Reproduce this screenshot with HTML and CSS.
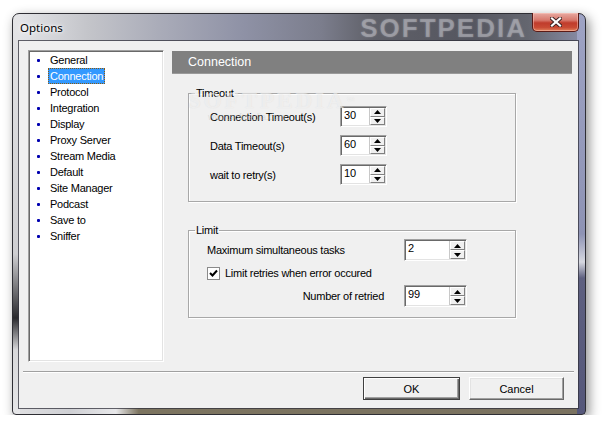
FILE: index.html
```html
<!DOCTYPE html>
<html lang="en">
<head>
  <meta charset="UTF-8">
  <meta name="viewport" content="width=device-width, initial-scale=1.0">
  <title>Options</title>
  <link rel="stylesheet" href="styles.css">
</head>
<body>
  <div class="window">
    <div class="titlebar">
      <span class="title">Options</span>
      <span class="watermark">SOFTPEDIA</span>
      <button class="close-btn">
        <svg width="12" height="10" viewBox="0 0 12 10">
          <path d="M2 1.5 L10 8.5 M10 1.5 L2 8.5" stroke="#3a2020" stroke-width="4" stroke-linecap="square"/>
          <path d="M2 1.5 L10 8.5 M10 1.5 L2 8.5" stroke="#fff" stroke-width="2.2" stroke-linecap="square"/>
        </svg>
      </button>
    </div>

    <div class="client">
      <div class="main">
        <ul class="nav-list">
          <li><span>General</span></li>
          <li class="selected"><span>Connection</span></li>
          <li><span>Protocol</span></li>
          <li><span>Integration</span></li>
          <li><span>Display</span></li>
          <li><span>Proxy Server</span></li>
          <li><span>Stream Media</span></li>
          <li><span>Default</span></li>
          <li><span>Site Manager</span></li>
          <li><span>Podcast</span></li>
          <li><span>Save to</span></li>
          <li><span>Sniffer</span></li>
        </ul>

        <div class="panel">
          <div class="panel-header">Connection</div>

          <fieldset class="group group-timeout">
            <legend>Timeout</legend>
            <div class="row">
              <label>Connection Timeout(s)</label>
              <div class="spin">
                <input type="text" value="30">
                <span class="spin-btns">
                  <span class="spin-up"><svg width="7" height="4"><polygon points="0,4 3.5,0 7,4"/></svg></span>
                  <span class="spin-down"><svg width="7" height="4"><polygon points="0,0 3.5,4 7,0"/></svg></span>
                </span>
              </div>
            </div>
            <div class="row">
              <label>Data Timeout(s)</label>
              <div class="spin">
                <input type="text" value="60">
                <span class="spin-btns">
                  <span class="spin-up"><svg width="7" height="4"><polygon points="0,4 3.5,0 7,4"/></svg></span>
                  <span class="spin-down"><svg width="7" height="4"><polygon points="0,0 3.5,4 7,0"/></svg></span>
                </span>
              </div>
            </div>
            <div class="row">
              <label>wait to retry(s)</label>
              <div class="spin">
                <input type="text" value="10">
                <span class="spin-btns">
                  <span class="spin-up"><svg width="7" height="4"><polygon points="0,4 3.5,0 7,4"/></svg></span>
                  <span class="spin-down"><svg width="7" height="4"><polygon points="0,0 3.5,4 7,0"/></svg></span>
                </span>
              </div>
            </div>
          </fieldset>

          <fieldset class="group group-limit">
            <legend>Limit</legend>
            <div class="row">
              <label>Maximum simultaneous tasks</label>
              <div class="spin spin-wide">
                <input type="text" value="2">
                <span class="spin-btns">
                  <span class="spin-up"><svg width="7" height="4"><polygon points="0,4 3.5,0 7,4"/></svg></span>
                  <span class="spin-down"><svg width="7" height="4"><polygon points="0,0 3.5,4 7,0"/></svg></span>
                </span>
              </div>
            </div>
            <div class="row row-check">
              <span class="checkbox">
                <svg width="11" height="11" viewBox="0 0 11 11"><path d="M2 5 L4.5 7.5 L9 2.5" fill="none" stroke="#000" stroke-width="2"/></svg>
              </span>
              <span>Limit retries when error occured</span>
            </div>
            <div class="row">
              <label class="label-right">Number of retried</label>
              <div class="spin spin-wide">
                <input type="text" value="99">
                <span class="spin-btns">
                  <span class="spin-up"><svg width="7" height="4"><polygon points="0,4 3.5,0 7,4"/></svg></span>
                  <span class="spin-down"><svg width="7" height="4"><polygon points="0,0 3.5,4 7,0"/></svg></span>
                </span>
              </div>
            </div>
          </fieldset>

          <div class="stamp">SOFTPEDIA<sup>™</sup><small>www.softpedia.com</small></div>
        </div>
      </div>

      <div class="separator"></div>

      <div class="buttons">
        <button class="btn btn-default">OK</button>
        <button class="btn">Cancel</button>
      </div>
    </div>
  </div>
</body>
</html>
```

FILE: styles.css
```css
body {
  margin: 0;
  background-color: #fff;
  font-family: "Liberation Sans", Arial, sans-serif;
  font-size: 11px;
  color: #000;
}

.window {
  margin: 13px 0 0 12px;
  width: 574px;
  height: 402px;
  box-sizing: border-box;
  display: flex;
  flex-direction: column;
  padding: 0 7px 6px 6px;
  border: 1px solid #2e2e34;
  border-radius: 7px 7px 4px 4px;
  box-shadow: 3px 4px 12px rgba(0, 0, 0, 0.45);
  background:
    linear-gradient(#e4e4e6, #cfcfd2 60%, #2a2a2e 76%, #d8d8da 84%, #e6e6e8) left top / 7px 100% no-repeat,
    linear-gradient(#9ea3c4, #8e93b4 55%, #d6d8e0 62%, #5e6080 66%, #55577a) right top / 8px 100% no-repeat,
    linear-gradient(to right, #e0e0e2, #cfd0d4 10%, #e8e8ea 18%, #7c7460 22%, #7a7260 100%) left bottom / 100% 7px no-repeat,
    linear-gradient(to right, #e6e7ea 0%, #c4c5ca 13%, #a9abb8 26%, #8f92a6 40%, #7b7d8c 54%, #5f6068 63%, #555660 80%, #64666f 90%, #8a8ea8 100%);
}

.titlebar {
  height: 27px;
  display: flex;
  align-items: flex-start;
}

.title {
  margin: 6px 0 0 1px;
  font-family: "Noto Sans", "Open Sans", sans-serif;
  font-size: 11.5px;
  line-height: 15px;
  text-shadow: 0 0 6px #fff, 0 0 3px #fff;
}

.watermark {
  margin: 2px 5px 0 auto;
  font-weight: bold;
  font-size: 26px;
  line-height: 25px;
  letter-spacing: 2px;
  color: rgba(200, 200, 206, 0.42);
  text-shadow: 0 0 2px rgba(220, 220, 225, 0.3);
}

.close-btn {
  width: 47px;
  height: 19px;
  margin: -1px -1px 0 0;
  padding: 0;
  border: 1px solid #5a1a16;
  border-top: none;
  border-radius: 0 0 5px 5px;
  background: linear-gradient(#e8aaa2, #d7786c 40%, #c03c2c 55%, #c84a34 80%, #e2825c);
  box-shadow: inset 0 0 0 1px rgba(255, 210, 200, 0.45);
  display: flex;
  align-items: center;
  justify-content: center;
}

.client {
  height: 367px;
  background-color: #f0f0f0;
  box-shadow: 0 0 0 1px rgba(50, 50, 60, 0.75);
  display: flex;
  flex-direction: column;
}

.main {
  display: flex;
  padding: 9px 6px 0 9px;
  height: 312px;
}

.nav-list {
  margin: 0;
  padding: 0;
  list-style: none;
  width: 136px;
  height: 312px;
  box-sizing: border-box;
  background-color: #fff;
  border: 1px solid;
  border-color: #a0a0a0 #fff #fff #a0a0a0;
  box-shadow: inset 1px 1px 0 #696969, inset -1px -1px 0 #e3e3e3;
  padding-top: 1px;
  letter-spacing: -0.25px;
}

.nav-list li {
  display: flex;
  align-items: center;
  height: 16px;
}

.nav-list li::before {
  content: "";
  width: 3px;
  height: 3px;
  margin: 0 8px 0 8px;
  border-radius: 1px;
  background-color: #0000b0;
}

.nav-list li span {
  line-height: 14px;
  padding: 0 1px;
  border: 1px solid transparent;
}

.nav-list li.selected span {
  background-color: #3399ff;
  color: #fff;
  border: 1px dotted #8a5a10;
}

.panel {
  flex: 1;
  margin: 1px 0 0 8px;
  position: relative;
}

.panel-header {
  height: 23px;
  line-height: 23px;
  padding-left: 16px;
  background-color: #808080;
  border-bottom: 1px solid #9a9a9a;
  box-sizing: border-box;
  color: #fff;
  font-size: 12.5px;
}

.group {
  width: 328px;
  box-sizing: border-box;
  margin: 0 0 0 16px;
  padding: 2px 0 0 0;
  border: 1px solid #a8a8a8;
  box-shadow: 1px 1px 0 #fff, inset 1px 1px 0 #fff;
  letter-spacing: -0.25px;
}

.group legend {
  margin-left: 6px;
  padding: 0 1px;
  line-height: 13px;
}

.group-timeout {
  margin-top: 13px;
  padding-bottom: 12px;
}

.group-timeout .row {
  height: 29px;
  padding-left: 21px;
}

.group-timeout label {
  width: 130px;
}

.group-limit {
  margin-top: 22px;
  padding-bottom: 10px;
}

.group-limit .row {
  height: 22px;
  padding-left: 18px;
}

.group-limit label {
  width: 197px;
}

.group-limit .label-right {
  text-align: right;
  padding-right: 20px;
  box-sizing: border-box;
}

.group-limit .row-check {
  height: 24px;
}

.row {
  display: flex;
  align-items: center;
}

.spin {
  display: flex;
  width: 47px;
  height: 21px;
  box-sizing: border-box;
  background-color: #fff;
  border: 1px solid;
  border-color: #a0a0a0 #fff #fff #a0a0a0;
  box-shadow: inset 1px 1px 0 #696969, inset -1px -1px 0 #e3e3e3;
  padding: 1px;
}

.spin-wide {
  width: 63px;
  height: 22px;
}

.spin input {
  flex: 1;
  min-width: 0;
  border: none;
  outline: none;
  padding: 1px 0 0 2px;
  font-family: "Liberation Sans", Arial, sans-serif;
  font-size: 11px;
  align-self: flex-start;
  background: transparent;
}

.spin-btns {
  width: 15px;
  display: flex;
  flex-direction: column;
  border-left: 1px solid #c8c8c8;
}

.spin-up,
.spin-down {
  flex: 1;
  display: flex;
  align-items: center;
  justify-content: center;
  background-color: #f0f0f0;
  border: 1px solid;
  border-color: #fff #808080 #808080 #fff;
}

.spin-btns svg {
  fill: #000;
}

.checkbox {
  width: 13px;
  height: 13px;
  box-sizing: border-box;
  border: 1px solid #8a8a8a;
  background-color: #fff;
  margin-right: 5px;
  display: flex;
  align-items: center;
  justify-content: center;
}

.stamp {
  position: absolute;
  left: 16px;
  top: 39px;
  font-family: "Liberation Serif", serif;
  font-weight: bold;
  font-size: 23px;
  letter-spacing: 3px;
  line-height: 22px;
  color: rgba(255, 255, 255, 0.5);
  text-shadow: 0 0 1px rgba(160, 160, 160, 0.25);
  pointer-events: none;
}

.stamp sup {
  font-size: 8px;
  vertical-align: top;
  letter-spacing: 0;
}

.stamp small {
  display: block;
  margin-left: 20px;
  font-family: "Liberation Sans", sans-serif;
  font-weight: normal;
  font-size: 9px;
  letter-spacing: 0;
  line-height: 10px;
  color: rgba(200, 200, 200, 0.5);
  text-shadow: none;
}

.separator {
  margin: 9px 4px 0;
  border-top: 1px solid #a0a0a0;
  border-bottom: 1px solid #fff;
}

.buttons {
  display: flex;
  justify-content: flex-end;
  gap: 9px;
  padding: 4px 14px 0 0;
}

.btn {
  width: 95px;
  height: 23px;
  padding: 0;
  font-family: "Liberation Sans", Arial, sans-serif;
  font-size: 11px;
  color: #000;
  background-color: #f0f0f0;
  border: 1px solid;
  border-color: #fff #696969 #696969 #fff;
  box-shadow: inset -1px -1px 0 #a0a0a0, inset 1px 1px 0 #e3e3e3;
}

.btn-default {
  width: 97px;
  border: 1px solid #404040;
  box-shadow: inset 1px 1px 0 #fff, inset -1px -1px 0 #696969, inset -2px -2px 0 #a0a0a0;
}
```
